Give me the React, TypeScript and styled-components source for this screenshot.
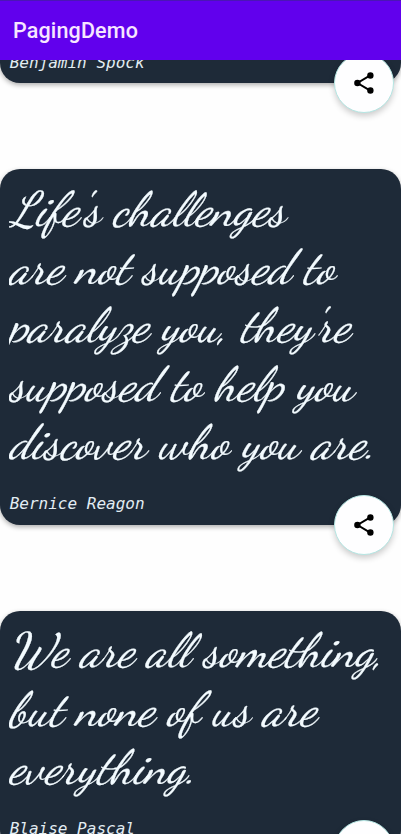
import React from 'react';
import styled, { createGlobalStyle } from 'styled-components';

const GlobalStyle = createGlobalStyle`
  * { box-sizing: border-box; }
  body { margin: 0; background: #fefefe; }
`;

const Screen = styled.div`
  height: 834px;
  display: flex;
  flex-direction: column;
  overflow: hidden;
  background: #fefefe;
`;

const AppBar = styled.header`
  position: relative;
  z-index: 2;
  flex: none;
  height: 60px;
  display: flex;
  align-items: center;
  padding: 1px 13px 0;
  background: #6100ed;
  border-top: 1px solid #4b16b4;
`;

const Title = styled.h1`
  margin: 0;
  font: 500 21.5px/28px Roboto, sans-serif;
  letter-spacing: 0.15px;
  color: #f6e6ff;
`;

const QuoteList = styled.main`
  display: flex;
  flex-direction: column;
  gap: 86.3px;
  margin-top: -116px;
`;

const Card = styled.article<{ $height: number }>`
  position: relative;
  flex: none;
  height: ${(p) => p.$height}px;
  display: flex;
  flex-direction: column;
  justify-content: space-between;
  padding: 11.5px 9px 8.5px;
  border-radius: 20px;
  background: #1e2a38;
  box-shadow: 0 2px 5px rgba(0, 0, 0, 0.32);
`;

const Quote = styled.div`
  font: italic 400 48.25px/58.3px 'Dancing Script', 'Liberation Serif', cursive;
  color: #f3fbff;
  -webkit-text-stroke: 0.25px #f3fbff;
  overflow: hidden;
`;

const Line = styled.div`
  height: 58.3px;
  white-space: nowrap;
`;

const Author = styled.div`
  padding-left: 0.7px;
  font: italic 16px/24px 'DejaVu Sans Mono', monospace;
  color: #e3edf3;
`;

const ShareButton = styled.button`
  position: absolute;
  right: 7px;
  bottom: -30px;
  width: 60px;
  height: 60px;
  display: grid;
  place-items: center;
  padding: 0;
  border: 1px solid #b5e6e3;
  border-radius: 50%;
  background: #fefeff;
  box-shadow: 0 3px 6px rgba(0, 0, 0, 0.2);
`;

const ShareIcon = () => (
  <svg width="24" height="24" viewBox="0 0 24 24" aria-hidden="true">
    <path d="M18.2 4.4 5.5 12l12.7 7.6" fill="none" stroke="#000" strokeWidth="2" />
    <circle cx="18.4" cy="4.5" r="3.2" />
    <circle cx="5.4" cy="12" r="3.2" />
    <circle cx="18.4" cy="19.5" r="3.2" />
  </svg>
);

type QuoteItem = { author: string; height: number; lines: string[] };

const quotes: QuoteItem[] = [
  { author: 'Benjamin Spock', height: 139, lines: [] },
  {
    author: 'Bernice Reagon',
    height: 355.4,
    lines: [
      "Life's challenges",
      'are not supposed to',
      "paralyze you, they're",
      'supposed to help you',
      'discover who you are.',
    ],
  },
  {
    author: 'Blaise Pascal',
    height: 239,
    lines: ['We are all something,', 'but none of us are', 'everything.'],
  },
];

export default function App() {
  return (
    <>
      <GlobalStyle />
      <Screen>
        <AppBar>
          <Title>PagingDemo</Title>
        </AppBar>
        <QuoteList>
          {quotes.map((q) => (
            <Card key={q.author} $height={q.height}>
              <Quote>
                {q.lines.map((l) => (
                  <Line key={l}>{l}</Line>
                ))}
              </Quote>
              <Author>{q.author}</Author>
              <ShareButton aria-label="Share">
                <ShareIcon />
              </ShareButton>
            </Card>
          ))}
        </QuoteList>
      </Screen>
    </>
  );
}
